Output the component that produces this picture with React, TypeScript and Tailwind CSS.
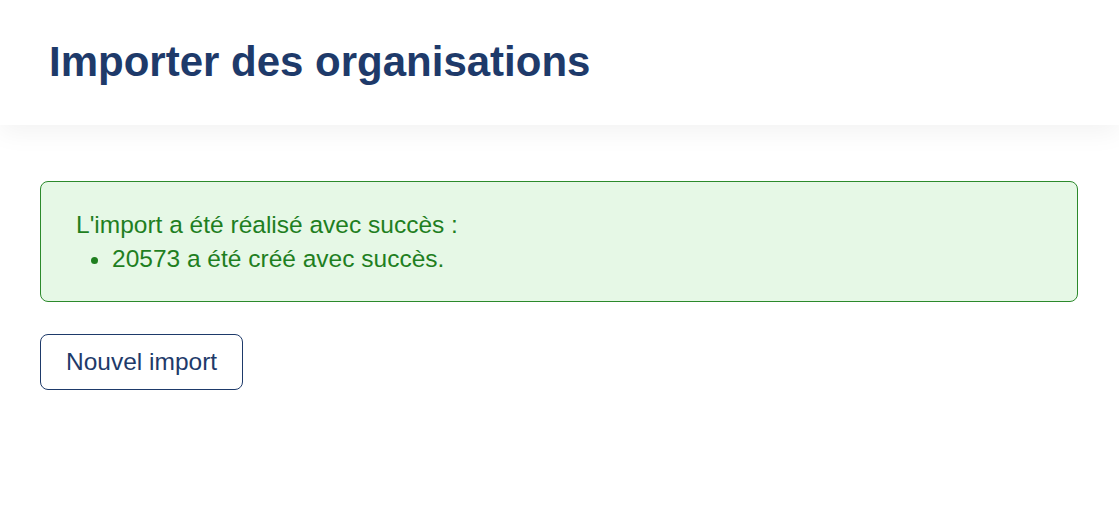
export default function App() {
  return (
    <div className="min-h-screen bg-white font-['Liberation_Sans',Arial,sans-serif]">
      {/* Header */}
      <header className="relative z-10 h-[125px] bg-white px-[49px] pt-[38px] shadow-[0_8px_24px_rgba(0,0,0,0.05)]">
        <h1 className="text-[42px] font-bold leading-[48px] text-[#1e3a6a]">Importer des organisations</h1>
      </header>

      <main className="pl-10 pr-[41px] pt-14">
        {/* Success alert */}
        <div className="rounded-lg border border-[#2c8a2c] bg-[#e6f8e6] pl-[35px] pr-9 pt-[26px] pb-[25px] text-[24.5px] leading-[34px] text-[#1f7f1f]">
          <p>L'import a été réalisé avec succès :</p>
          <ul className="list-disc pl-[36px]">
            <li>20573 a été créé avec succès.</li>
          </ul>
        </div>

        <button className="mt-8 h-[56px] rounded-lg border border-[#1e3a6a] bg-white px-[25px] text-[24.5px] text-[#1e3a6a]">
          Nouvel import
        </button>
      </main>
    </div>
  );
}
